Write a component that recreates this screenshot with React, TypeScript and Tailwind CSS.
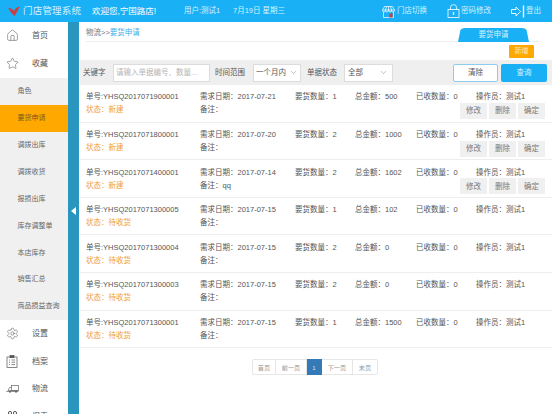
import { Home, Star, Settings, ChevronDown } from "lucide-react";

const subs = ["角色", "要货申请", "调拨出库", "调拨收货", "报损出库", "库存调整单", "本店库存", "销售汇总", "商品损益查询"];
const rows = [
  ["YHSQ2017071900001", "新建", "2017-07-21", "1", "500", "", true],
  ["YHSQ2017071800001", "新建", "2017-07-20", "2", "1000", "", true],
  ["YHSQ2017071400001", "新建", "2017-07-14", "2", "1602", "qq", true],
  ["YHSQ2017071300005", "待收货", "2017-07-15", "1", "102", "", false],
  ["YHSQ2017071300004", "待收货", "2017-07-15", "2", "0", "", false],
  ["YHSQ2017071300003", "待收货", "2017-07-15", "2", "0", "", false],
  ["YHSQ2017071300001", "待收货", "2017-07-15", "1", "1500", "", false],
] as const;

function Nav({ icon, label }: { icon: React.ReactNode; label: string }) {
  return (
    <div className="h-[27.7px] flex items-center shrink-0">
      <div className="w-[24px] flex justify-center">{icon}</div>
      <span className="ml-[8px] text-[8px] text-[#555]">{label}</span>
    </div>
  );
}

const StoreIcon = () => (
  <svg width="13" height="13" viewBox="0 0 13 13" fill="none" stroke="white" strokeWidth="0.7">
    <path d="M2.5 1.5 H10.5 L12.5 5 H0.5 Z" />
    <path d="M0.5 5 Q0.5 7 2 7 Q3.5 7 3.5 5 Q3.5 7 5 7 Q6.5 7 6.5 5 Q6.5 7 8 7 Q9.5 7 9.5 5 Q9.5 7 11 7 Q12.5 7 12.5 5" />
    <path d="M4.5 1.5 L3.5 5 M6.5 1.5 V5 M8.5 1.5 L9.5 5" />
    <path d="M1.5 7 V12.5 H11.5 V7" />
    <rect x="7.5" y="8.5" width="3" height="4" fill="#c9403f" stroke="none" />
  </svg>
);

const LockIcon = () => (
  <svg width="13" height="14" viewBox="0 0 13 14" fill="none" stroke="white" strokeWidth="0.8">
    <rect x="1" y="5.5" width="11" height="8" />
    <path d="M3.5 5.5 V3.5 Q3.5 0.6 6.5 0.6 Q9.5 0.6 9.5 3.5 V5.5" />
    <path d="M6.5 8 V11" strokeWidth="1.3" />
  </svg>
);

const ClipIcon = () => (
  <svg width="12" height="13" viewBox="0 0 12 13" fill="none" stroke="#555" strokeWidth="0.7">
    <rect x="1" y="2" width="10" height="10.5" />
    <rect x="4" y="0.5" width="4" height="2.2" fill="#555" />
    <path d="M3 5 H4 M3 7.3 H4 M3 9.6 H4 M5.5 5 H9 M5.5 7.3 H9 M5.5 9.6 H9" />
  </svg>
);

const TruckIcon = () => (
  <svg width="13" height="8" viewBox="0 0 13 8" fill="none" stroke="#666" strokeWidth="0.7">
    <rect x="5.5" y="0.5" width="7" height="5" />
    <path d="M5.5 2.5 H3.5 L2 5.5 H12.5" />
    <path d="M0.3 6.5 H12.5" />
    <circle cx="4" cy="6.8" r="0.9" fill="#555" stroke="none" />
    <circle cx="10" cy="6.8" r="0.9" fill="#555" stroke="none" />
  </svg>
);

export default function App() {
  return (
    <div className="w-[552px] h-[414px] overflow-hidden bg-white flex flex-col font-['Liberation_Sans','Noto_Sans_CJK_SC',sans-serif] text-[#555]">
      <header className="h-[22px] shrink-0 bg-[#1ab0f6] flex items-center text-white">
        <svg width="12" height="10" viewBox="0 0 12 10" className="ml-[8px]">
          <path d="M0 1.5 L4 3 L6 5 L7.5 2.5 L12 0 L9.5 5 L6.5 10 L3 6.5 Z" fill="#c9403f" />
        </svg>
        <span className="ml-[3px] text-[9.5px] w-[69px] whitespace-nowrap tracking-[0.2px] text-[#d8f1fd]">门店管理系统</span>
        <span className="w-[92px] text-[8.5px] whitespace-nowrap">欢迎您,宁国路店!</span>
        <span className="text-[7.5px] w-[49px] whitespace-nowrap text-[#d8f1fd]">用户:测试1</span>
        <span className="text-[7.5px] w-[149px] whitespace-nowrap text-[#d8f1fd]">7月19日 星期三</span>
        <StoreIcon />
        <span className="ml-[2px] text-[7.5px] w-[50px] whitespace-nowrap text-[#d8f1fd]">门店切换</span>
        <LockIcon />
        <span className="ml-[1px] text-[7.5px] w-[50px] whitespace-nowrap text-[#d8f1fd]">密码修改</span>
        <svg width="14" height="13" viewBox="0 0 14 13" fill="none" stroke="white" strokeWidth="0.9">
          <path d="M0.5 4.5 H5 V2 L9.5 6.5 L5 11 V8.5 H0.5 Z" />
          <path d="M12.5 0.5 V12.5" strokeWidth="1.4" />
        </svg>
        <span className="ml-[1px] text-[7.5px] whitespace-nowrap text-[#d8f1fd]">登出</span>
      </header>
      <div className="flex flex-1 min-h-0">
        <aside className="w-[68px] shrink-0 flex flex-col overflow-hidden">
          <div className="h-[28px] shrink-0"><Nav icon={<Home size={13} strokeWidth={1} />} label="首页" /></div>
          <div className="h-[28px] shrink-0"><Nav icon={<Star size={13} strokeWidth={1} />} label="收藏" /></div>
          <div className="bg-[#f0f0f0] flex flex-col text-[7px] text-[#666]">
            {subs.map((s) => (
              <div key={s} className={`h-[26.9px] flex items-center pl-[17.5px] whitespace-nowrap ${s === "要货申请" ? "bg-[#ffa800] text-[#7a5a20]" : ""}`}>
                {s}
              </div>
            ))}
          </div>
          <Nav icon={<Settings size={13} strokeWidth={1} />} label="设置" />
          <Nav icon={<ClipIcon />} label="档案" />
          <Nav icon={<TruckIcon />} label="物流" />
          <Nav
            icon={
              <svg width="13" height="13" viewBox="0 0 13 13" fill="none" stroke="#444" strokeWidth="0.9">
                <circle cx="4" cy="3" r="1.6" />
                <circle cx="9" cy="3" r="1.6" />
                <path d="M1 11 Q1 6 4 6 Q6.5 6 6.5 9 Q6.5 6 9 6 Q12 6 12 11" />
              </svg>
            }
            label="报表"
          />
        </aside>
        <div className="w-[11px] shrink-0 bg-[#2a95bf] flex items-center justify-center pb-[14px]">
          <div className="w-0 h-0 border-y-[4.5px] border-y-transparent border-r-[5px] border-r-white" />
        </div>
        <main className="flex-1 min-w-0 flex flex-col">
          <div className="h-[20px] ml-[7px] mr-[12px] border-b border-[#eeeeee] flex items-end justify-between relative shrink-0">
            <span className="text-[7.5px] text-[#777] pb-[3px]">物流&gt;&gt;<span className="text-[#3aaeea]">要货申请</span></span>
            <div className="absolute right-[11px] bottom-[-1px] w-[71px] h-[14px] bg-[#1ab0f6] rounded-t-[7px] text-[7.5px] text-[#d8f1fd] flex items-center justify-center [clip-path:polygon(4%_0,96%_0,100%_100%,0_100%)]">要货申请</div>
          </div>
          <div className="h-[18px] shrink-0 flex justify-end items-start pt-[3px] pr-[18px]">
            <div className="w-[25px] h-[13px] bg-[#ffa800] rounded-[1px] text-[7px] text-[#fde9b8] flex items-center justify-center">新增</div>
          </div>
          <div className="h-[25px] shrink-0 bg-[#efefef] ml-[1px] flex items-center text-[7.5px] text-[#555]">
            <span className="ml-[3px] w-[30px]">关键字</span>
            <div className="w-[97px] h-[18px] bg-white border border-[#dcdcdc] flex items-center pl-[2px] text-[#b5b5b5] whitespace-nowrap">请输入单据编号、数量...</div>
            <span className="ml-[5px] w-[38px]">时间范围</span>
            <div className="w-[48px] h-[18px] bg-white border border-[#dcdcdc] flex items-center justify-between px-[2px] whitespace-nowrap">一个月内<ChevronDown size={9} strokeWidth={1} /></div>
            <span className="ml-[6px] w-[37px]">单据状态</span>
            <div className="w-[49px] h-[18px] bg-white border border-[#dcdcdc] flex items-center justify-between pl-[3px] pr-[4px]">全部<ChevronDown size={9} strokeWidth={1} /></div>
            <div className="ml-[60px] w-[45px] h-[18px] bg-white border border-[#8ccdee] rounded-[2px] flex items-center justify-center">清除</div>
            <div className="ml-[3px] w-[46px] h-[18px] bg-[#1ab0f6] rounded-[2px] text-[#d8f1fd] flex items-center justify-center">查询</div>
          </div>
          <div className="ml-[1px] flex flex-col shrink-0">
            {rows.map((r) => (
              <div key={r[0]} className="h-[37.6px] shrink-0 border-b border-[#eeeeee] flex flex-col text-[7.5px] text-[#555] pl-[6px] relative">
                <div className="flex pt-[6px] h-[18px] items-center whitespace-nowrap">
                  <span className="w-[114px]">单号:{r[0]}</span>
                  <span className="w-[95px]">需求日期：{r[2]}</span>
                  <span className="w-[60px]">要货数量：{r[3]}</span>
                  <span className="w-[61px]">总金额：{r[4]}</span>
                  <span className="w-[60px]">已收数量：0</span>
                  <span>操作员：测试1</span>
                </div>
                <div className="flex h-[14px] items-center whitespace-nowrap">
                  <span className="w-[114px] text-[#f0a040]">状态：{r[1]}</span>
                  <span>备注：{r[5]}</span>
                </div>
                {r[6] && (
                  <div className="absolute right-[7px] top-[18px] flex gap-[2px] text-[7.5px] text-[#777]">
                    {["修改", "删除", "确定"].map((b) => (
                      <div key={b} className="w-[27px] h-[16px] bg-[#f0f0f0] flex items-center justify-center">{b}</div>
                    ))}
                  </div>
                )}
              </div>
            ))}
          </div>
          <div className="mt-[11px] ml-[173px] flex text-[6.2px] text-[#999] h-[16px]">
            {[["首页", "w-[24px]"], ["前一页", "w-[31px]"], ["1", "w-[15px]"], ["下一页", "w-[31px]"], ["末页", "w-[25px]"]].map(([t, w]) => (
              <div key={t} className={`${w} flex items-center justify-center border-y border-r first:border-l first:rounded-l-[2px] last:rounded-r-[2px] ${t === "1" ? "bg-[#337ab7] border-[#337ab7] text-[#cfe3f3]" : "border-[#e6e6e6]"}`}>{t}</div>
            ))}
          </div>
        </main>
      </div>
    </div>
  );
}
